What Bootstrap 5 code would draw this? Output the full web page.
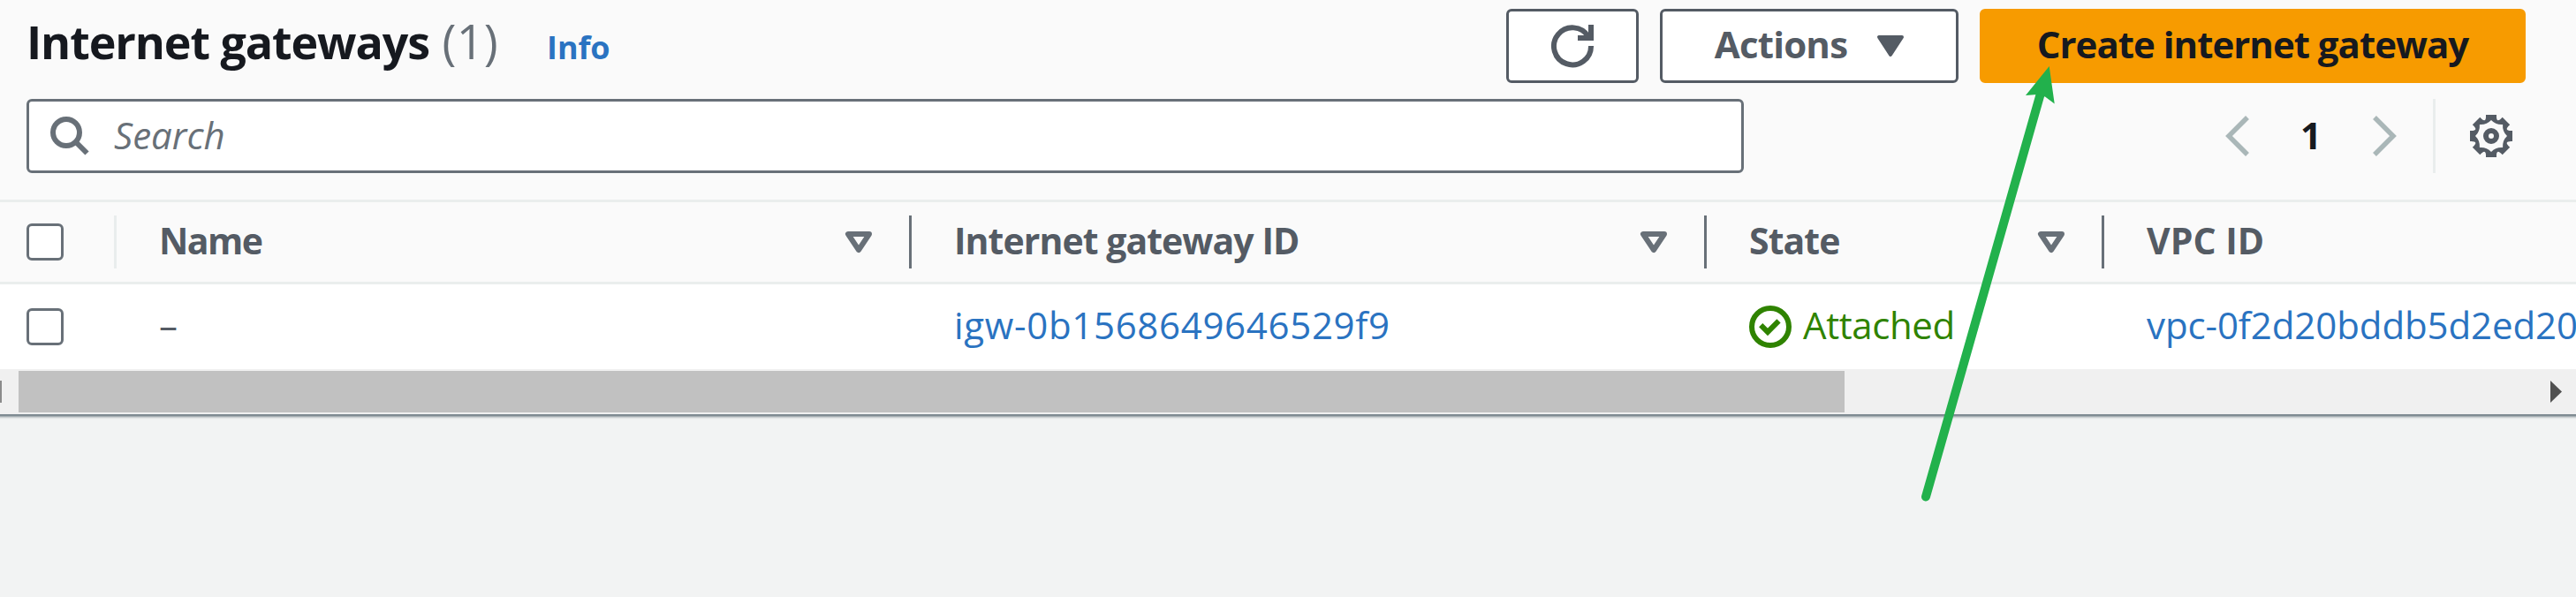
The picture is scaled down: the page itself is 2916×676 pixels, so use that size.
<!DOCTYPE html>
<html lang="en">
<head>
<meta charset="utf-8">
<title>Internet gateways</title>
<link href="https://cdn.jsdelivr.net/npm/bootstrap@5.3.0/dist/css/bootstrap.min.css" rel="stylesheet">
<style>
body{font-family:"Open Sans","Noto Sans",sans-serif;font-size:42px;line-height:66px;color:#545b64;background:#f2f3f3}
svg{display:block;flex:none;overflow:visible}
main{height:676px}
.panel{background:#fafafa}
.panel-head{height:226px;padding-top:10px}
.title-row{height:84px;padding:0 57px 0 30px}
.title-row h1{font-size:52px;line-height:74px;font-weight:700;letter-spacing:-1.1px;color:#16191f}
.title-group{padding-bottom:9px}
.counter{font-weight:400;font-size:54px;color:#687078;letter-spacing:.3px;margin-left:2px}
.info-link{font-size:36px;font-weight:700;color:#2a73c1;margin-left:55px;letter-spacing:-.1px;text-decoration:none}
.btn.console-btn{height:84px;border:3px solid #545b64;border-radius:6px;background:#fff;color:#545b64;font-size:42px;font-weight:700;line-height:74px;padding:0 0 4px;letter-spacing:-.8px}
.btn.btn-refresh{width:150px;padding-bottom:0}
.btn.btn-actions{width:338px;margin-left:24px;gap:34px}
.btn-actions svg{margin-top:4px}
.btn.btn-create{width:618px;margin-left:24px;background:#f79b00;border-color:#f79b00;color:#16191f;letter-spacing:-1px}
.tool-row{height:84px;margin-top:18px;padding:0 72px 0 30px}
.search-box{width:1944px;height:84px;border:3px solid #687078;border-radius:6px;background:#fff;color:#687078;padding-left:24px}
.search-box span{font-style:italic;margin-left:28px;padding-bottom:3px}
.page-no{color:#16191f;font-weight:700;margin:0 60px 0 58px;width:22px;text-align:center;padding-bottom:3px}
.tool-divider{width:3px;height:84px;background:#e9eded;margin:0 39px 0 41px}
.table.gateways{table-layout:fixed;border-collapse:separate;border-spacing:0;margin:0;color:#545b64;border-top:3px solid #eaeeed;--bs-table-bg:transparent}
.gateways th,.gateways td{padding:0 0 0 48px;border:0;vertical-align:middle;white-space:nowrap}
.gateways thead th{height:93px;font-weight:700;font-size:41px;letter-spacing:-.95px;color:#545b64;border-bottom:3px solid #eaeeed}
.gateways td{height:96px;background:#fff}
.gateways th:first-child,.gateways td:first-child{padding-left:30px}
.head-cell{height:60px;border-right:3px solid #687078;padding-right:42px}
.head-cell.light{border-color:#e9eded}
.txt{display:block;line-height:60px;padding-bottom:4px}
.tight{letter-spacing:-1.5px}
.loose{letter-spacing:0}
.form-check-input.tick{width:42px;height:42px;margin:0;border:3px solid #687078;border-radius:6px;background-color:#fff;display:block;float:none}
.gateways a{color:#2a73c1;text-decoration:none}
.state-ok{color:#2f8300;gap:13px;letter-spacing:-.4px}
.igw{letter-spacing:.68px}
.vpc{letter-spacing:-.1px}
.scroll-track{height:51px;background:#f0f0f0;padding-right:16px}
.scroll-thumb{width:2067px;height:47px;background:#c1c1c1;margin-left:19px}
.arrow-left{width:2px;height:25px;background:#8b8b8b}
.panel-edge{height:6px;background:linear-gradient(#7f8b92 0 2px,#a4adb2 2px 3px,#c9ced0 3px 4px,#e2e5e6 4px 5px,#edefef 5px)}
.pointer{left:0;top:0;pointer-events:none}
</style>
</head>
<body>
<main class="position-relative overflow-hidden">
<section class="panel">
  <div class="panel-head">
    <div class="title-row d-flex align-items-center">
      <div class="title-group d-flex align-items-baseline me-auto">
        <h1 class="m-0">Internet gateways <span class="counter">(1)</span></h1>
        <a class="info-link" href="#">Info</a>
      </div>
      <button class="btn console-btn btn-refresh d-flex align-items-center justify-content-center" aria-label="Refresh">
        <svg width="48" height="48" viewBox="0 0 48 48" fill="none" stroke="currentColor" stroke-width="6"><path d="M45 24A21 21 0 1 1 42 13.500M45 0V15H30"/></svg>
      </button>
      <button class="btn console-btn btn-actions d-flex align-items-center justify-content-center">Actions
        <svg width="30" height="24" viewBox="0 0 30 24" fill="currentColor" stroke="currentColor" stroke-width="4" stroke-linejoin="round"><path d="M2 2H28L15 22Z"/></svg>
      </button>
      <button class="btn console-btn btn-create">Create internet gateway</button>
    </div>
    <div class="tool-row d-flex align-items-center">
      <div class="search-box d-flex align-items-center me-auto">
        <svg width="44" height="44" viewBox="0 0 44 44" fill="none" stroke="currentColor" stroke-width="6"><circle cx="18" cy="18" r="15"/><path d="M28.500 28.500L41.500 41.500"/></svg>
        <span>Search</span>
      </div>
      <svg width="27" height="46" viewBox="0 0 27 46" fill="none" stroke="#aab7b8" stroke-width="5.500"><path d="M25 2L4 23L25 44"/></svg>
      <span class="page-no">1</span>
      <svg width="27" height="46" viewBox="0 0 27 46" fill="none" stroke="#aab7b8" stroke-width="5.500"><path d="M2 2L23 23L2 44"/></svg>
      <div class="tool-divider"></div>
      <svg width="48" height="48" viewBox="-24 -24 48 48" fill="#545b64" fill-rule="evenodd"><path d="M-6-24H6Q5.400-13 12.700-21.200L21.200-12.700Q13-5.400 24-6V6Q13 5.400 21.200 12.700L12.700 21.200Q5.400 13 6 24H-6Q-5.400 13-12.700 21.200L-21.200 12.700Q-13 5.400-24 6V-6Q-13-5.400-21.200-12.700L-12.700-21.200Q-5.400-13-6-24ZM0-18Q-5.200-12.500-13.100-13.100Q-12.500-5.200-18 0Q-12.500 5.200-13.100 13.100Q-5.200 12.500 0 18Q5.200 12.500 13.100 13.100Q12.500 5.200 18 0Q12.500-5.200 13.100-13.100Q5.200-12.500 0-18Z"/><circle r="6" fill="none" stroke="#545b64" stroke-width="6"/></svg>
    </div>
  </div>
  <table class="table gateways">
    <colgroup><col style="width:132px"><col style="width:900px"><col style="width:900px"><col style="width:450px"><col></colgroup>
    <thead>
      <tr>
        <th><div class="head-cell light d-flex align-items-center"><input class="form-check-input tick" type="checkbox" aria-label="Select all"></div></th>
        <th><div class="head-cell d-flex align-items-center justify-content-between"><span class="txt tight">Name</span><svg width="30" height="24" viewBox="0 0 30 24" fill="none" stroke="#687078" stroke-width="6" stroke-linejoin="round"><path d="M3 3H27L15 21Z"/></svg></div></th>
        <th><div class="head-cell d-flex align-items-center justify-content-between"><span class="txt">Internet gateway ID</span><svg width="30" height="24" viewBox="0 0 30 24" fill="none" stroke="#687078" stroke-width="6" stroke-linejoin="round"><path d="M3 3H27L15 21Z"/></svg></div></th>
        <th><div class="head-cell d-flex align-items-center justify-content-between"><span class="txt">State</span><svg width="30" height="24" viewBox="0 0 30 24" fill="none" stroke="#687078" stroke-width="6" stroke-linejoin="round"><path d="M3 3H27L15 21Z"/></svg></div></th>
        <th><span class="txt loose">VPC ID</span></th>
      </tr>
    </thead>
    <tbody>
      <tr>
        <td><input class="form-check-input tick" type="checkbox" aria-label="Select gateway"></td>
        <td><span class="txt">–</span></td>
        <td><a class="txt igw" href="#">igw-0b1568649646529f9</a></td>
        <td><div class="state-ok d-flex align-items-center"><svg width="48" height="48" viewBox="0 0 48 48" fill="none" stroke="currentColor" stroke-width="6"><circle cx="24" cy="24" r="21"/><path d="M13.200 22.100L21 29.900L33.500 17.400"/></svg><span class="txt">Attached</span></div></td>
        <td><a class="txt vpc" href="#">vpc-0f2d20bddb5d2ed20</a></td>
      </tr>
    </tbody>
  </table>
  <div class="scroll-track d-flex align-items-center">
    <div class="arrow-left"></div>
    <div class="scroll-thumb me-auto"></div>
    <svg width="13" height="25" viewBox="0 0 13 25" fill="#505050"><path d="M0 0L13 12.500L0 25Z"/></svg>
  </div>
</section>
<div class="panel-edge"></div>
<svg class="pointer position-absolute" width="2916" height="676" viewBox="0 0 2916 676" fill="#22b14c"><path d="M2180 562.500L2311 102" stroke="#22b14c" stroke-width="10" stroke-linecap="round"/><path d="M2319.700 75L2293 108L2306 107L2315 109.500L2325.700 117.500Z"/></svg>
</main>
<script src="https://cdn.jsdelivr.net/npm/bootstrap@5.3.0/dist/js/bootstrap.bundle.min.js"></script>
</body>
</html>
